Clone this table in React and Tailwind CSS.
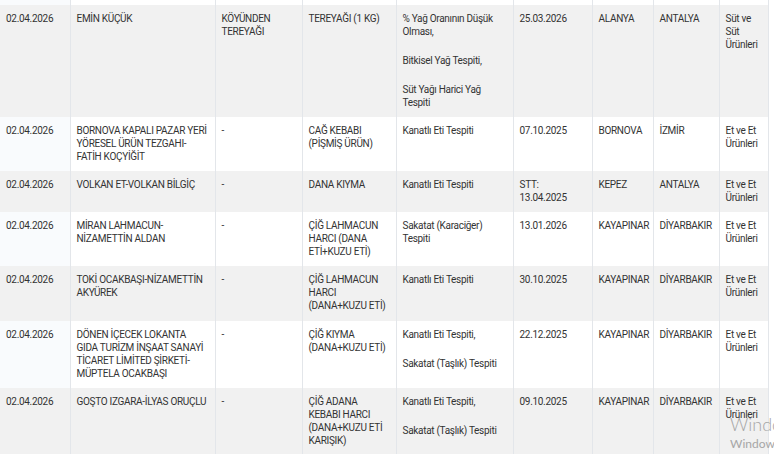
import React from "react";

const rows = [
  ["02.04.2026", "EMİN KÜÇÜK", "KÖYÜNDEN TEREYAĞI", "TEREYAĞI (1 KG)", ["% Yağ Oranının Düşük Olması,", "Bitkisel Yağ Tespiti,", "Süt Yağı Harici Yağ Tespiti"], "25.03.2026", "ALANYA", "ANTALYA", "Süt ve Süt Ürünleri"],
  ["02.04.2026", "BORNOVA KAPALI PAZAR YERİ YÖRESEL ÜRÜN TEZGAHI-FATİH KOÇYİĞİT", "-", "CAĞ KEBABI (PİŞMİŞ ÜRÜN)", ["Kanatlı Eti Tespiti"], "07.10.2025", "BORNOVA", "İZMİR", "Et ve Et Ürünleri"],
  ["02.04.2026", "VOLKAN ET-VOLKAN BİLGİÇ", "-", "DANA KIYMA", ["Kanatlı Eti Tespiti"], "STT: 13.04.2025", "KEPEZ", "ANTALYA", "Et ve Et Ürünleri"],
  ["02.04.2026", "MİRAN LAHMACUN-NİZAMETTİN ALDAN", "-", "ÇİĞ LAHMACUN HARCI (DANA ETİ+KUZU ETİ)", ["Sakatat (Karaciğer) Tespiti"], "13.01.2026", "KAYAPINAR", "DİYARBAKIR", "Et ve Et Ürünleri"],
  ["02.04.2026", "TOKİ OCAKBAŞI-NİZAMETTİN AKYÜREK", "-", "ÇİĞ LAHMACUN HARCI (DANA+KUZU ETİ)", ["Kanatlı Eti Tespiti"], "30.10.2025", "KAYAPINAR", "DİYARBAKIR", "Et ve Et Ürünleri"],
  ["02.04.2026", "DÖNEN İÇECEK LOKANTA GIDA TURİZM İNŞAAT SANAYİ TİCARET LİMİTED ŞİRKETİ-MÜPTELA OCAKBAŞI", "-", "ÇİĞ KIYMA (DANA+KUZU ETİ)", ["Kanatlı Eti Tespiti,", "Sakatat (Taşlık) Tespiti"], "22.12.2025", "KAYAPINAR", "DİYARBAKIR", "Et ve Et Ürünleri"],
  ["02.04.2026", "GOŞTO IZGARA-İLYAS ORUÇLU", "-", "ÇİĞ ADANA KEBABI HARCI (DANA+KUZU ETİ KARIŞIK)", ["Kanatlı Eti Tespiti,", "Sakatat (Taşlık) Tespiti"], "09.10.2025", "KAYAPINAR", "DİYARBAKIR", "Et ve Et Ürünleri"],
];

const widths = [70, 145, 87, 94, 117, 79, 61, 66, 49];

export default function App() {
  return (
    <div
      className="relative w-[774px] h-[454px] overflow-hidden bg-white text-[#333] text-[10px] leading-[13px] tracking-[-0.3px]"
      style={{ fontFamily: "Roboto, 'Noto Sans', sans-serif" }}
    >
      <table className="table-fixed border-collapse w-[768px]">
        <colgroup>
          {widths.map((w, i) => (
            <col key={i} style={{ width: w }} />
          ))}
        </colgroup>
        <tbody>
          <tr className="h-[5px]">
            {widths.map((w, i) => (
              <td key={i} className={`p-0 border-r border-[#e3e6ea] ${i === 0 ? "bg-[#f9fbfd]" : "bg-white"}`} />
            ))}
          </tr>
          {rows.map((r, ri) => {
            const gray = ri % 2 === 0;
            return (
              <tr key={ri} className={gray ? "bg-[#f1f1f1]" : "bg-white"}>
                {r.map((c, ci) => (
                  <td
                    key={ci}
                    className={`align-top pl-[6px] pr-[7px] pt-[7px] ${ri === 4 ? "pb-[9px]" : "pb-[8px]"} border-r border-[#e3e6ea] ${
                      ci === 0 && !gray ? "bg-[#f9fbfd]" : ""
                    }`}
                  >
                    {Array.isArray(c)
                      ? c.map((p, pi) => (
                          <div key={pi} className={pi > 0 ? "mt-[16px]" : ""}>
                            {p}
                          </div>
                        ))
                      : c}
                  </td>
                ))}
              </tr>
            );
          })}
        </tbody>
      </table>
      <div className="absolute left-[730px] top-[413px] text-[18px] leading-[22px] font-light tracking-normal text-[#a6a6a6] whitespace-nowrap" style={{ fontFamily: "Lato, 'Open Sans', sans-serif" }}>
        Windows
      </div>
      <div className="absolute left-[730px] top-[437px] text-[12px] leading-[14px] tracking-normal text-[#a6a6a6] whitespace-nowrap" style={{ fontFamily: "Lato, 'Open Sans', sans-serif" }}>
        Windows
      </div>
    </div>
  );
}
